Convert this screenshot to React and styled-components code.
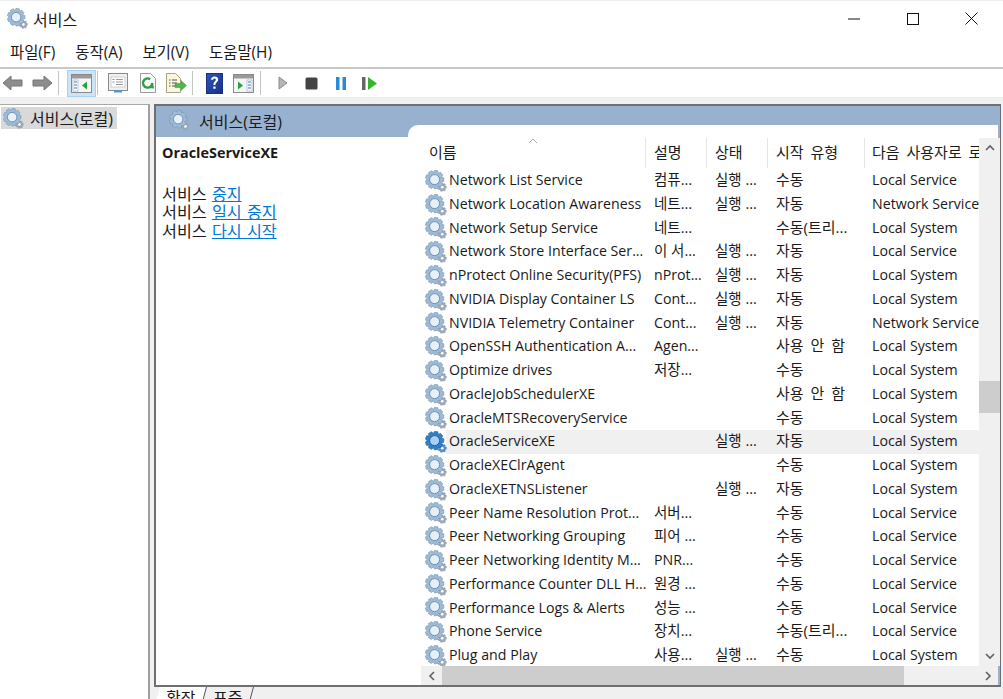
import React from "react";
import styled, { createGlobalStyle } from "styled-components";

const FONT = `"Open Sans", "Noto Sans CJK KR", sans-serif`;

const rows = [
  ["Network List Service", "컴퓨...", "실행 ...", "수동", "Local Service"],
  ["Network Location Awareness", "네트...", "실행 ...", "자동", "Network Service"],
  ["Network Setup Service", "네트...", "", "수동(트리...", "Local System"],
  ["Network Store Interface Ser...", "이 서...", "실행 ...", "자동", "Local Service"],
  ["nProtect Online Security(PFS)", "nProt...", "실행 ...", "자동", "Local System"],
  ["NVIDIA Display Container LS", "Cont...", "실행 ...", "자동", "Local System"],
  ["NVIDIA Telemetry Container", "Cont...", "실행 ...", "자동", "Network Service"],
  ["OpenSSH Authentication A...", "Agen...", "", "사용 안 함", "Local System"],
  ["Optimize drives", "저장...", "", "수동", "Local System"],
  ["OracleJobSchedulerXE", "", "", "사용 안 함", "Local System"],
  ["OracleMTSRecoveryService", "", "", "수동", "Local System"],
  ["OracleServiceXE", "", "실행 ...", "자동", "Local System", true],
  ["OracleXEClrAgent", "", "", "수동", "Local System"],
  ["OracleXETNSListener", "", "실행 ...", "자동", "Local System"],
  ["Peer Name Resolution Prot...", "서버...", "", "수동", "Local Service"],
  ["Peer Networking Grouping", "피어 ...", "", "수동", "Local Service"],
  ["Peer Networking Identity M...", "PNR...", "", "수동", "Local Service"],
  ["Performance Counter DLL H...", "원경 ...", "", "수동", "Local Service"],
  ["Performance Logs & Alerts", "성능 ...", "", "수동", "Local Service"],
  ["Phone Service", "장치...", "", "수동(트리...", "Local Service"],
  ["Plug and Play", "사용...", "실행 ...", "수동", "Local System"],
];

const GlobalStyle = createGlobalStyle`
  html, body {
    margin: 0;
    background: #fff;
    overflow: hidden;
  }
`;

const Page = styled.div`
  width: 1003px;
  height: 699px;
  display: flex;
  flex-direction: column;
  overflow: hidden;
  font-family: ${FONT};
  color: #1a1a1a;
`;

const TitleBar = styled.div`
  height: 38px;
  flex: none;
  box-sizing: border-box;
  display: flex;
  align-items: center;
  padding: 0 0 2px 7px;
  border-top: 1px solid #eee;
  gap: 5px;
  font-size: 16px;
`;

const WindowButtons = styled.div`
  margin-left: auto;
  display: flex;
  align-items: center;
  margin-right: 2px;
`;

const WindowButton = styled.span`
  width: 59px;
  height: 20px;
  display: flex;
  align-items: center;
  justify-content: center;
`;

const MenuBar = styled.div`
  height: 29px;
  flex: none;
  box-sizing: border-box;
  display: flex;
  align-items: center;
  gap: 20px;
  padding: 0 0 2px 10px;
  font-size: 15.4px;
`;

const MenuItem = styled.span`
  display: block;
`;

const Toolbar = styled.div`
  height: 28px;
  flex: none;
  display: flex;
  align-items: center;
  border-top: 2px solid #c8c8c8;
  border-bottom: 1px solid #ececec;
`;

const ToolButton = styled.span`
  width: ${(p) => p.$w || 27}px;
  height: 27px;
  flex: none;
  display: flex;
  align-items: center;
  justify-content: center;
  box-sizing: border-box;
  background: ${(p) => (p.$active ? "#cce4f7" : "transparent")};
  border: 1px solid ${(p) => (p.$active ? "#a8d2f2" : "transparent")};
`;

const ToolDivider = styled.span`
  width: 1px;
  height: 24px;
  flex: none;
  margin: 0 ${(p) => p.$right}px 0 ${(p) => p.$left}px;
  background: #c4c4c4;
`;

const Workspace = styled.div`
  flex: 1;
  min-height: 0;
  display: flex;
  background: #f0f0f0;
  padding-top: 6px;
`;

const TreePane = styled.div`
  width: 147px;
  flex: none;
  background: #fff;
  border-top: 1px solid #a9a9a9;
  border-right: 2px solid #a0a0a0;
  padding: 2px 0 0 1px;
`;

const TreeItem = styled.div`
  width: 116px;
  height: 22px;
  display: flex;
  align-items: center;
  gap: 6px;
  padding-left: 2px;
  box-sizing: border-box;
  background: #d9d9d9;
  font-size: 16px;
`;

const MainColumn = styled.div`
  flex: 1;
  min-width: 0;
  margin-left: 4px;
  margin-right: 2px;
  display: flex;
  flex-direction: column;
`;

const Panel = styled.div`
  height: 583px;
  flex: none;
  box-sizing: border-box;
  display: flex;
  background: #fff;
  border: 1px solid #6f6f6f;
  border-width: 2px 1px 2px 2px;
`;

const DetailColumn = styled.div`
  width: 252px;
  flex: none;
`;

const Banner = styled.div`
  height: 31px;
  box-sizing: border-box;
  display: flex;
  align-items: center;
  gap: 9px;
  padding: 0 0 2px 13px;
  background: #97b1cf;
  font-size: 16px;
`;

const Detail = styled.div`
  padding: 7px 0 0 6px;
  font-size: 16.2px;
  line-height: 18.5px;
  word-spacing: 1px;
`;

const DetailName = styled.div`
  font-size: 14.4px;
  font-weight: 700;
  margin-bottom: 22px;
`;

const DetailLink = styled.span`
  color: #0078d7;
  text-decoration: underline;
`;

const ListColumn = styled.div`
  flex: 1;
  min-width: 0;
  display: flex;
  flex-direction: column;
  background: #97b1cf;
  padding: 19px 2px 0 0;
`;

const ListPane = styled.div`
  flex: 1;
  min-height: 0;
  background: #fff;
  border-top-left-radius: 10px;
  padding-left: 13px;
  display: flex;
  flex-direction: column;
`;

const ListMain = styled.div`
  height: 541px;
  flex: none;
  display: flex;
`;

const Table = styled.div`
  width: 558px;
  flex: none;
  overflow: hidden;
  font-size: 14.2px;
`;

const Columns = styled.div`
  display: grid;
  grid-template-columns: 225px 61px 61px 97px 114px;
`;

const HeaderRow = styled(Columns)`
  height: 44px;
  padding-top: 13px;
  box-sizing: border-box;
`;

const HeaderCell = styled.div`
  position: relative;
  height: 30px;
  padding-left: ${(p) => p.$pad || 8}px;
  border-right: 1px solid #e5e5e5;
  white-space: nowrap;
  overflow: hidden;
  font-size: 15px;
  word-spacing: 3px;
  line-height: 28px;
  &:last-child {
    border-right: 0;
  }
`;

const SortCaret = styled.svg`
  position: absolute;
  left: 107px;
  top: 0;
`;

const Row = styled(Columns)`
  height: 23.75px;
  align-items: center;
  line-height: 23.75px;
  white-space: nowrap;
`;

const Cell = styled.div`
  padding-left: ${(p) => p.$pad || 8}px;
  overflow: hidden;
  height: 100%;
  margin-top: -2px;
  font-size: ${(p) => (p.$hangul ? "14.5px" : "14.2px")};
`;

const StartCell = styled(Cell)`
  font-size: 15px;
  word-spacing: 3px;
`;

const NameCell = styled.div`
  display: flex;
  align-items: center;
  gap: 2px;
  padding-left: 4px;
  height: 100%;
  overflow: hidden;
`;

const NameText = styled.span`
  flex: 1;
  height: 100%;
  margin-top: -2px;
`;

const SelectedRow = styled(Row)`
  background: linear-gradient(to right, #fff 25px, #f0f0f0 25px);
`;

const VScroll = styled.div`
  width: 21px;
  flex: none;
  margin-top: 13px;
  background: #f0f0f0;
  display: flex;
  flex-direction: column;
  justify-content: space-between;
  align-items: center;
  position: relative;
`;

const ArrowSlot = styled.div`
  height: 20px;
  display: flex;
  align-items: center;
  justify-content: center;
  flex: none;
`;

const VThumb = styled.div`
  position: absolute;
  left: 0;
  right: 0;
  top: 243px;
  height: 32px;
  background: #cdcdcd;
`;

const HScroll = styled.div`
  flex: 1;
  display: flex;
  background: #f0f0f0;
`;

const HArrow = styled.div`
  width: 21px;
  flex: none;
  display: flex;
  align-items: center;
  justify-content: center;
`;

const HThumb = styled.div`
  width: 462px;
  flex: none;
  background: #cdcdcd;
`;

const HTrack = styled.div`
  flex: 1;
`;

const Tabs = styled.div`
  display: flex;
  height: 14px;
  overflow: hidden;
  font-size: 16px;
  line-height: 22px;
  padding-left: 3px;
`;

const Tab = styled.span`
  padding: 0 8px 0 9px;
  height: 22px;
  background: ${(p) => (p.$active ? "#fff" : "transparent")};
  border-right: 1px solid #555;
  transform: skewX(-15deg);
  span {
    display: block;
    transform: skewX(15deg);
  }
`;

function toothPath(cx, cy, outer, inner, teeth) {
  const pts = [];
  const step = (Math.PI * 2) / teeth;
  for (let i = 0; i < teeth; i++) {
    const a = i * step;
    [
      [inner, -0.5],
      [outer, -0.27],
      [outer, 0.27],
      [inner, 0.5],
    ].forEach(([r, k]) => {
      const t = a + k * step;
      pts.push(`${(cx + r * Math.cos(t)).toFixed(2)} ${(cy + r * Math.sin(t)).toFixed(2)}`);
    });
  }
  return "M" + pts.join("L") + "Z";
}

const BIG_GEAR = toothPath(9.6, 9.6, 9.4, 7.4, 9);
const SMALL_GEAR = toothPath(17.2, 17.2, 4.6, 3.3, 7);

function Gear({ size = 22, active }) {
  const main = active ? "#2f7fc9" : "#9dbad6";
  const dark = active ? "#1c5d9f" : "#6f8dab";
  const hole = active ? "#a9d0f2" : "#e6f0f8";
  return (
    <svg width={size} height={size} viewBox="0 0 22 22" style={{ flex: "none" }}>
      <path d={SMALL_GEAR} fill={active ? "#4d8fca" : "#9aa8b6"} />
      <circle cx="17.2" cy="17.2" r="1.4" fill="#fff" />
      <path d={BIG_GEAR} fill={main} stroke={dark} strokeWidth="0.5" />
      <circle cx="9.6" cy="9.6" r="5" fill={hole} stroke={dark} strokeWidth="1" />
    </svg>
  );
}

function ArrowTool({ flip }) {
  return (
    <svg width="22" height="18" viewBox="0 0 22 18" style={flip ? { transform: "scaleX(-1)" } : undefined}>
      <path d="M1 9 9 2v4h11v6H9v4z" fill="#8d8d8d" stroke="#777" />
    </svg>
  );
}

function ConsoleTool({ right }) {
  return (
    <svg width="21" height="19" viewBox="0 0 21 19">
      <rect x="0.5" y="0.5" width="20" height="18" fill="#f4f6f8" stroke="#8a8a8a" />
      <rect x="1" y="1" width="19" height="3.5" fill="#9a9a9a" />
      {right ? (
        <>
          <rect x="14" y="6" width="5" height="11" fill="#fff" stroke="#9aa7b5" strokeWidth="0.6" />
          <path d="M5 7.5 10 11.500 5 15.500z" fill="#27a33a" />
          <path d="M15 8h3M15 11h3M15 14h3" stroke="#3b78b5" />
        </>
      ) : (
        <>
          <rect x="2" y="6" width="5" height="11" fill="#fff" stroke="#9aa7b5" strokeWidth="0.6" />
          <path d="M16 7.500 11 11.500 16 15.500z" fill="#27a33a" />
          <path d="M3 8h3M3 11h3M3 14h3" stroke="#3b78b5" />
        </>
      )}
    </svg>
  );
}

function PropertiesTool() {
  return (
    <svg width="20" height="20" viewBox="0 0 20 20">
      <rect x="0.5" y="0.5" width="19" height="17" fill="#eef1f4" stroke="#8a8a8a" />
      <rect x="3" y="4" width="14" height="10" fill="#fff" stroke="#b5b5b5" strokeWidth="0.6" />
      <path d="M8 6.500h7M8 9h7M8 11.500h7" stroke="#9a9a9a" />
      <path d="M4.500 6.500h2M4.500 9h2" stroke="#3fa0e0" />
      <rect x="6" y="17.500" width="8" height="2" fill="#3fa0e0" />
    </svg>
  );
}

function RefreshTool() {
  return (
    <svg width="18" height="20" viewBox="0 0 18 20">
      <path d="M1.500 .5h10l5 5v14h-15z" fill="#fafafa" stroke="#9c9c9c" />
      <path d="M13.200 10a4.600 4.600 0 1 1-2-3.800" fill="none" stroke="#2f9e44" strokeWidth="2.400" />
      <path d="M9.500 15 15 15.500 14 10z" fill="#2f9e44" />
    </svg>
  );
}

function ExportTool() {
  return (
    <svg width="21" height="20" viewBox="0 0 21 20">
      <path d="M.5.5h9l5 5v14H.5z" fill="#fbf6dc" stroke="#a9a38a" />
      <path d="M3 7h1.500M6 7h5M3 10h1.500M6 10h5M3 13h1.500M6 13h4" stroke="#555" />
      <path d="M9 10.500h6V7.500l5.500 5-5.500 5v-3H9z" fill="#4cb848" stroke="#3a9a3a" strokeWidth="0.5" />
    </svg>
  );
}

function HelpTool() {
  return (
    <svg width="17" height="21" viewBox="0 0 17 21">
      <defs>
        <linearGradient id="helpFill" x1="0" y1="0" x2="1" y2="1">
          <stop offset="0" stopColor="#2f55b5" />
          <stop offset="1" stopColor="#16308a" />
        </linearGradient>
      </defs>
      <rect x="0.5" y="0.5" width="16" height="20" fill="url(#helpFill)" stroke="#1b2f7a" />
      <path
        d="M5 6.800C5 4.800 6.500 3.500 8.600 3.500s3.600 1.300 3.600 3.100c0 2.600-2.700 2.600-2.700 5.400H7.400c0-3.400 2.400-3.500 2.400-5.300 0-.8-.5-1.300-1.300-1.300-.9 0-1.300.6-1.400 1.400zM7.300 13.500h2.300v2.300H7.300z"
        fill="#fff"
      />
    </svg>
  );
}

function Chevron({ dir }) {
  const d = {
    up: "M1 6 5 2l4 4",
    down: "M1 2l4 4 4-4",
    left: "M6 1 2 5l4 4",
    right: "M2 1l4 4-4 4",
  }[dir];
  const horizontal = dir === "left" || dir === "right";
  return (
    <svg width={horizontal ? 8 : 10} height={horizontal ? 10 : 8} viewBox={horizontal ? "0 0 8 10" : "0 0 10 8"}>
      <path d={d} fill="none" stroke="#606060" strokeWidth="1.6" />
    </svg>
  );
}

const HANGUL = /[가-힣]/;

function ServiceRow({ row }) {
  const [name, desc, status, start, logon, selected] = row;
  const Wrapper = selected ? SelectedRow : Row;
  return (
    <Wrapper>
      <NameCell>
        <Gear active={selected} />
        <NameText>{name}</NameText>
      </NameCell>
      <Cell $hangul={HANGUL.test(desc)}>{desc}</Cell>
      <Cell $hangul>{status}</Cell>
      <StartCell>{start}</StartCell>
      <Cell $pad={7}>{logon}</Cell>
    </Wrapper>
  );
}

export default function App() {
  return (
    <Page>
      <GlobalStyle />
      <TitleBar>
        <Gear size={21} />
        <span>서비스</span>
        <WindowButtons>
          <WindowButton>
            <svg width="12" height="2" viewBox="0 0 12 2">
              <path d="M0 1h12" stroke="#111" strokeWidth="1" />
            </svg>
          </WindowButton>
          <WindowButton>
            <svg width="12" height="12" viewBox="0 0 12 12">
              <rect x="0.5" y="0.5" width="11" height="11" fill="none" stroke="#111" />
            </svg>
          </WindowButton>
          <WindowButton>
            <svg width="13" height="13" viewBox="0 0 13 13">
              <path d="M.5.5l12 12M12.500.5l-12 12" stroke="#111" />
            </svg>
          </WindowButton>
        </WindowButtons>
      </TitleBar>
      <MenuBar>
        <MenuItem>파일(F)</MenuItem>
        <MenuItem>동작(A)</MenuItem>
        <MenuItem>보기(V)</MenuItem>
        <MenuItem>도움말(H)</MenuItem>
      </MenuBar>
      <Toolbar>
        <ToolButton $w={26}><ArrowTool /></ToolButton>
        <ToolButton $w={32}><ArrowTool flip /></ToolButton>
        <ToolDivider $left={0} $right={8} />
        <ToolButton $w={29} $active><ConsoleTool /></ToolButton>
        <ToolDivider $left={1} $right={5} />
        <ToolButton $w={30}><PropertiesTool /></ToolButton>
        <ToolButton $w={29}><RefreshTool /></ToolButton>
        <ToolButton $w={29}><ExportTool /></ToolButton>
        <ToolDivider $left={1} $right={7} />
        <ToolButton $w={28}><HelpTool /></ToolButton>
        <ToolButton $w={30}><ConsoleTool right /></ToolButton>
        <ToolDivider $left={2} $right={8} />
        <ToolButton $w={28}>
          <svg width="10" height="14" viewBox="0 0 10 14"><path d="M1 1l8 6-8 6z" fill="#b5b5b5" stroke="#8c8c8c" /></svg>
        </ToolButton>
        <ToolButton $w={29}>
          <svg width="13" height="13" viewBox="0 0 13 13"><rect x="0.5" y="0.500" width="12" height="12" rx="1.500" fill="#444" /></svg>
        </ToolButton>
        <ToolButton $w={29}>
          <svg width="10" height="13" viewBox="0 0 10 13"><path d="M0 0h3.500v13H0zM6.500 0H10v13H6.500z" fill="#2a8ad8" /></svg>
        </ToolButton>
        <ToolButton $w={29}>
          <svg width="15" height="13" viewBox="0 0 15 13"><path d="M0 0h3.500v13H0z" fill="#666" /><path d="M6 0l9 6.500L6 13z" fill="#35b52f" /></svg>
        </ToolButton>
      </Toolbar>
      <Workspace>
        <TreePane>
          <TreeItem>
            <Gear size={21} />
            <span>서비스(로컬)</span>
          </TreeItem>
        </TreePane>
        <MainColumn>
          <Panel>
            <DetailColumn>
              <Banner>
                <Gear size={21} />
                <span>서비스(로컬)</span>
              </Banner>
              <Detail>
                <DetailName>OracleServiceXE</DetailName>
                <div>서비스 <DetailLink>중지</DetailLink></div>
                <div>서비스 <DetailLink>일시 중지</DetailLink></div>
                <div>서비스 <DetailLink>다시 시작</DetailLink></div>
              </Detail>
            </DetailColumn>
            <ListColumn>
              <ListPane>
                <ListMain>
                  <Table>
                    <HeaderRow>
                      <HeaderCell>
                        이름
                        <SortCaret width="10" height="6" viewBox="0 0 10 6">
                          <path d="M1 5l4-4 4 4" fill="none" stroke="#aaa" />
                        </SortCaret>
                      </HeaderCell>
                      <HeaderCell>설명</HeaderCell>
                      <HeaderCell>상태</HeaderCell>
                      <HeaderCell>시작 유형</HeaderCell>
                      <HeaderCell $pad={7}>다음 사용자로 로그온</HeaderCell>
                    </HeaderRow>
                    {rows.map((row) => (
                      <ServiceRow key={row[0]} row={row} />
                    ))}
                  </Table>
                  <VScroll>
                    <ArrowSlot><Chevron dir="up" /></ArrowSlot>
                    <VThumb />
                    <ArrowSlot><Chevron dir="down" /></ArrowSlot>
                  </VScroll>
                </ListMain>
                <HScroll>
                  <HArrow><Chevron dir="left" /></HArrow>
                  <HThumb />
                  <HTrack />
                  <HArrow><Chevron dir="right" /></HArrow>
                </HScroll>
              </ListPane>
            </ListColumn>
          </Panel>
          <Tabs>
            <Tab $active><span>확장</span></Tab>
            <Tab><span>표준</span></Tab>
          </Tabs>
        </MainColumn>
      </Workspace>
    </Page>
  );
}
